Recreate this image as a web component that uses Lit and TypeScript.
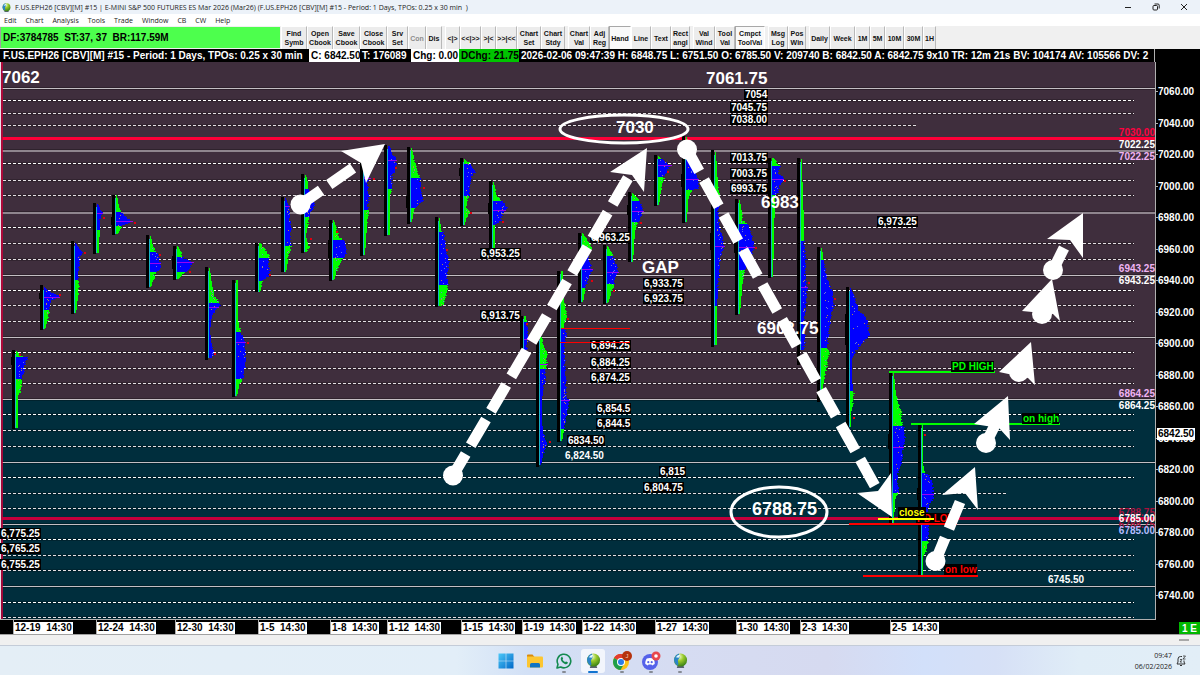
import { LitElement, html, svg, css } from "lit";
import { customElement } from "lit/decorators.js";
import { classMap } from "lit/directives/class-map.js";
import { styleMap } from "lit/directives/style-map.js";

type Pt = [number, number];

interface Profile {
  x: number;
  y: [number, number]; // extent of the black range bar
  va: [number, number]; // value area, drawn blue
  s: Pt[]; // silhouette as [y, width]
  poc?: number;
  dot?: Pt;
  ib?: [number, number]; // wider notch on the range bar
}

const PROFILES: Profile[] = [
  { x: 16, y: [350, 429], va: [357, 379], s: [[351, 1], [356, 6], [357, 12], [362, 9], [370, 8], [379, 6], [390, 5], [395, 2], [428, 2]], dot: [20, 354], ib: [357, 365] },
  { x: 44, y: [285, 330], va: [287, 310], s: [[287, 1], [291, 5], [295, 14], [297, 15], [300, 7], [310, 5], [320, 4], [325, 2], [329, 1]], poc: 297, dot: [60, 294], ib: [293, 299] },
  { x: 75, y: [241, 314], va: [243, 280], s: [[243, 1], [248, 4], [252, 8], [256, 4], [265, 4], [275, 3], [285, 4], [295, 3], [305, 2], [313, 1]], dot: [85, 252] },
  { x: 97, y: [203, 254], va: [204, 230], s: [[204, 1], [210, 4], [213, 5], [220, 3], [232, 3], [240, 2], [253, 2]], poc: 213, dot: [104, 217] },
  { x: 116, y: [195, 235], va: [212, 226], s: [[195, 1], [206, 3], [212, 5], [218, 11], [221, 16], [225, 6], [230, 4], [234, 1]], poc: 221, dot: [135, 222], ib: [217, 225] },
  { x: 150, y: [235, 288], va: [252, 272], s: [[236, 1], [246, 3], [252, 6], [253, 8], [258, 9], [265, 11], [270, 9], [272, 6], [280, 3], [287, 1]], poc: 263, dot: [160, 254] },
  { x: 177, y: [246, 280], va: [257, 272], s: [[246, 1], [254, 5], [258, 7], [260, 12], [262, 16], [268, 12], [272, 9], [274, 5], [279, 1]], poc: 262, dot: [190, 271], ib: [256, 269] },
  { x: 209, y: [267, 360], va: [303, 358], s: [[268, 1], [285, 3], [297, 6], [302, 10], [305, 11], [310, 7], [315, 3], [330, 1], [340, 2], [350, 4], [353, 5], [358, 2]], poc: 307, dot: [215, 353] },
  { x: 236, y: [280, 397], va: [332, 379], s: [[280, 2], [320, 2], [332, 5], [338, 8], [345, 9], [365, 9], [378, 7], [386, 3], [396, 1]], poc: 342, dot: [248, 342] },
  { x: 259, y: [243, 292], va: [258, 281], s: [[243, 2], [251, 7], [255, 10], [258, 11], [263, 9], [270, 11], [275, 10], [280, 4], [285, 3], [292, 1]], dot: [270, 274] },
  { x: 285, y: [197, 272], va: [198, 246], s: [[198, 1], [207, 4], [220, 5], [228, 6], [240, 5], [246, 6], [250, 5], [260, 3], [272, 1]], poc: 206 },
  { x: 305, y: [174, 253], va: [189, 217], s: [[175, 1], [182, 3], [188, 3], [200, 8], [205, 9], [212, 6], [218, 4], [225, 3], [235, 1], [248, 4], [252, 1]], dot: [311, 238] },
  { x: 333, y: [220, 281], va: [240, 258], s: [[220, 1], [236, 6], [240, 11], [250, 14], [255, 12], [260, 8], [270, 4], [280, 1]], dot: [337, 231], ib: [240, 258] },
  { x: 364, y: [150, 256], va: [160, 210], s: [[160, 1], [178, 6], [182, 3], [200, 5], [205, 3], [210, 5], [225, 3], [240, 2], [255, 1]], poc: 178, dot: [374, 178] },
  { x: 388, y: [145, 236], va: [146, 189], s: [[146, 2], [152, 4], [158, 8], [160, 8], [168, 8], [175, 4], [190, 4], [195, 2], [235, 2]], poc: 160, dot: [396, 167] },
  { x: 411, y: [147, 224], va: [178, 208], s: [[148, 1], [162, 4], [172, 7], [178, 9], [185, 9], [195, 11], [200, 12], [207, 5], [215, 2], [222, 1]], dot: [424, 187], ib: [196, 208] },
  { x: 439, y: [217, 307], va: [232, 285], s: [[218, 1], [230, 2], [233, 5], [250, 7], [262, 10], [275, 8], [285, 9], [295, 7], [303, 5], [306, 2]], dot: [447, 249] },
  { x: 464, y: [158, 226], va: [164, 196], s: [[159, 1], [163, 6], [168, 8], [171, 12], [175, 8], [185, 6], [195, 5], [207, 2], [212, 6], [218, 2], [225, 1]], dot: [471, 212], ib: [168, 176] },
  { x: 493, y: [181, 248], va: [201, 225], s: [[182, 1], [195, 4], [201, 9], [207, 14], [213, 9], [220, 8], [225, 2], [248, 2]], poc: 210, dot: [503, 221], ib: [203, 214] },
  { x: 524, y: [316, 349], va: [322, 350], s: [[316, 2], [324, 3], [335, 4], [350, 3]], poc: 339, dot: [527, 323] },
  { x: 540, y: [337, 467], va: [369, 465], s: [[337, 2], [345, 4], [352, 7], [365, 7], [370, 5], [380, 5], [390, 3], [400, 2], [420, 2], [432, 3], [440, 6], [445, 7], [450, 4], [465, 1]], poc: 364, dot: [550, 441] },
  { x: 561, y: [271, 442], va: [328, 429], s: [[271, 2], [295, 2], [308, 5], [318, 6], [325, 3], [335, 6], [345, 3], [370, 4], [385, 5], [395, 5], [400, 8], [410, 7], [418, 5], [430, 3], [441, 1]], poc: 400, dot: [568, 318] },
  { x: 582, y: [233, 303], va: [252, 288], s: [[233, 1], [240, 6], [248, 10], [255, 6], [262, 8], [270, 10], [277, 7], [285, 4], [302, 1]], poc: 269, dot: [592, 280] },
  { x: 607, y: [245, 304], va: [256, 284], s: [[246, 1], [255, 6], [265, 10], [272, 11], [280, 8], [285, 7], [292, 5], [303, 1]], poc: 272, dot: [614, 290] },
  { x: 632, y: [192, 262], va: [201, 222], s: [[193, 1], [200, 8], [210, 11], [218, 8], [222, 6], [230, 3], [262, 1]], poc: 211, dot: [641, 222], ib: [205, 215] },
  { x: 658, y: [155, 206], va: [159, 177], s: [[156, 1], [162, 8], [165, 13], [170, 9], [177, 6], [183, 5], [190, 3], [205, 1]], poc: 165, dot: [668, 171] },
  { x: 686, y: [136, 223], va: [155, 190], s: [[137, 1], [150, 3], [165, 7], [175, 11], [182, 13], [188, 12], [190, 6], [200, 2], [222, 1]], poc: 179, ib: [174, 187] },
  { x: 715, y: [150, 347], va: [200, 306], s: [[152, 1], [185, 3], [200, 5], [210, 3], [225, 4], [235, 7], [245, 9], [260, 5], [275, 4], [290, 3], [306, 2], [345, 2]], poc: 246, ib: [233, 250] },
  { x: 739, y: [199, 315], va: [224, 270], s: [[200, 1], [220, 4], [224, 9], [232, 12], [240, 14], [247, 15], [255, 12], [262, 9], [270, 6], [280, 4], [300, 2], [314, 1]], poc: 247, dot: [756, 247], ib: [240, 253] },
  { x: 772, y: [158, 278], va: [166, 195], s: [[158, 2], [166, 8], [172, 6], [178, 12], [185, 8], [192, 6], [195, 3], [240, 2], [277, 1]], poc: 179, dot: [785, 180] },
  { x: 801, y: [158, 365], va: [241, 352], s: [[159, 1], [205, 2], [215, 3], [240, 3], [260, 5], [270, 4], [290, 6], [300, 5], [320, 3], [335, 4], [350, 3]], poc: 287, dot: [809, 282] },
  { x: 821, y: [247, 402], va: [260, 348], s: [[248, 1], [262, 3], [275, 5], [295, 12], [305, 13], [315, 10], [330, 8], [348, 6], [352, 8], [365, 6], [380, 3], [395, 1]], dot: [835, 298] },
  { x: 850, y: [287, 427], va: [288, 391], s: [[288, 1], [298, 5], [310, 9], [317, 16], [325, 18], [334, 20], [340, 15], [350, 6], [358, 2], [380, 2], [388, 3], [392, 4], [405, 3], [412, 1], [427, 1]], dot: [854, 417], ib: [314, 345] },
  { x: 893, y: [372, 525], va: [426, 493], s: [[373, 1], [395, 3], [408, 7], [414, 9], [425, 9], [427, 11], [438, 12], [448, 10], [460, 9], [470, 6], [480, 4], [490, 6], [493, 5], [500, 2], [523, 1]], poc: 447, ib: [434, 449] },
  { x: 922, y: [423, 577], va: [473, 541], s: [[425, 1], [463, 1], [473, 3], [475, 7], [485, 11], [492, 11], [497, 12], [505, 7], [512, 5], [525, 7], [535, 6], [541, 6], [550, 4], [557, 1], [575, 1]], poc: 494, dot: [925, 434], ib: [488, 500] },
];

const SOLID: [number, boolean][] = [
  [88, false], [150, true], [212, true], [275, false], [337, false],
  [399, false], [462, false], [524, false], [586, false],
];

// dashed level: y and the x where it stops
const DASHED: Pt[] = [
  [100, 1134], [113, 1134], [125, 916], [163, 1134], [180, 1134], [195, 1134],
  [227, 916], [243, 1134], [259, 1134], [290, 1134], [305, 1134], [321, 1134],
  [352, 1134], [368, 1134], [383, 1134], [414, 1134], [430, 1134], [446, 1134],
  [477, 1134], [493, 1006], [508, 1134], [539, 1134], [555, 1134], [570, 1134],
  [602, 1134], [617, 1134],
];

interface Label { t: string; x: number; y: number; open?: boolean }
const LABELS: Label[] = [
  { t: "7054", x: 745, y: 98 }, { t: "7045.75", x: 731, y: 111 }, { t: "7038.00", x: 731, y: 123 },
  { t: "7013.75", x: 731, y: 161 }, { t: "7003.75", x: 731, y: 177 }, { t: "6993.75", x: 731, y: 192 },
  { t: "6,963.25", x: 591, y: 241 }, { t: "6,953.25", x: 481, y: 257 }, { t: "6,913.75", x: 481, y: 319 },
  { t: "6,973.25", x: 878, y: 225 }, { t: "6,933.75", x: 644, y: 287 }, { t: "6,923.75", x: 644, y: 302 },
  { t: "6,894.25", x: 591, y: 349 }, { t: "6,884.25", x: 591, y: 366 }, { t: "6,874.25", x: 591, y: 381 },
  { t: "6,854.5", x: 597, y: 412 }, { t: "6,844.5", x: 597, y: 427 }, { t: "6834.50", x: 568, y: 444 },
  { t: "6,824.50", x: 565, y: 459, open: true }, { t: "6,815", x: 660, y: 475 }, { t: "6,804.75", x: 644, y: 491 },
  { t: "6,775.25", x: 1, y: 537 }, { t: "6,765.25", x: 1, y: 552 }, { t: "6,755.25", x: 1, y: 568 },
  { t: "6745.50", x: 1048, y: 583, open: true },
];

const NOTES: { t: string; x: number; y: number; big?: boolean }[] = [
  { t: "7062", x: 2, y: 83 }, { t: "7061.75", x: 706, y: 84 }, { t: "7030", x: 616, y: 133 },
  { t: "GAP", x: 642, y: 273 }, { t: "6983", x: 761, y: 208 }, { t: "6903.75", x: 757, y: 334 },
  { t: "6788.75", x: 752, y: 515, big: true },
];

const EDGE: { t: string; y: number; c: string }[] = [
  { t: "7030.00", y: 136, c: "hot" }, { t: "7022.25", y: 148, c: "plain" }, { t: "7022.25", y: 160, c: "mauve" },
  { t: "6943.25", y: 272, c: "mauve" }, { t: "6943.25", y: 284, c: "plain" },
  { t: "6864.25", y: 397, c: "mauve" }, { t: "6864.25", y: 409, c: "plain" },
  { t: "6788.75", y: 516, c: "wine" }, { t: "6788.75", y: 528, c: "wine" },
  { t: "6785.00", y: 522, c: "plain" }, { t: "6785.00", y: 534, c: "sky" },
];

const ARROWS: { from: Pt; to: Pt; head: Pt[] }[] = [
  { from: [300.5, 204.5], to: [353, 168], head: [[385, 144], [341, 151], [361, 163], [366, 183]] },
  { from: [453, 475.5], to: [628, 178], head: [[647, 148], [610, 172], [632, 175], [644, 192]] },
  { from: [687, 149.5], to: [875, 486], head: [[892, 517], [857, 493], [878, 491], [891, 473]] },
  { from: [935.5, 561], to: [960, 502], head: [[975, 467], [942, 495], [965, 493], [978, 510]] },
  { from: [986, 443], to: [999, 417], head: [[1008, 396], [974, 424], [999, 428], [1010, 440]] },
  { from: [1019, 372], to: [1023, 362], head: [[1031, 342], [999, 372], [1028, 378], [1035, 385]] },
  { from: [1042, 314], to: [1046, 302], head: [[1052, 279], [1022, 311], [1053, 314], [1060, 321]] },
  { from: [1053, 270], to: [1064, 248], head: [[1083, 213], [1047, 239], [1070, 240], [1083, 258]] },
];

const SESSIONS: [number, string][] = [
  [13, "12-19\u00a0 14:30"], [96, "12-24\u00a0 14:30"], [175, "12-30\u00a0 14:30"], [258, "1-5\u00a0 14:30"],
  [330, "1-8\u00a0 14:30"], [387, "1-12\u00a0 14:30"], [461, "1-15\u00a0 14:30"], [522, "1-19\u00a0 14:30"],
  [582, "1-22\u00a0 14:30"], [655, "1-27\u00a0 14:30"], [736, "1-30\u00a0 14:30"], [800, "2-3\u00a0 14:30"],
  [890, "2-5\u00a0 14:30"],
];

/** Width of digits and punctuation in the bold 10px face. */
const inkWidth = (t: string) =>
  [...t].reduce((w, c) => w + (/[\d]/.test(c) ? 5.56 : /[-:]/.test(c) ? 3.33 : 2.78), 0);

const noise = (n: number) => {
  const v = Math.sin(n * 12.9898) * 43758.5453;
  return v - Math.floor(v);
};

@customElement("price-chart")
export class PriceChart extends LitElement {
  static styles = css`
    :host { display: block; background: #000; }
    .canvas { display: block; width: 100%; height: auto; font: bold 10px "Liberation Sans", Arial, sans-serif; }
    .plain { fill: #fff; }
    .dark { fill: #000; }
    .hot { fill: #ff0040; }
    .wine { fill: #a5123c; }
    .mauve { fill: #f0b4f4; }
    .sky { fill: #b4bcff; }
    .note { fill: #fff; font-size: 17px; }
    .note-big { font-size: 18px; }
    .edge { text-anchor: end; }
    .lime { fill: #00ff00; }
    .red { fill: #ff0000; }
    .yellow { fill: #ffff00; }
  `;

  private width(p: Profile, y: number) {
    const s = p.s;
    for (let i = 1; i < s.length; i++) {
      if (y <= s[i][0]) {
        const [y0, w0] = s[i - 1];
        const [y1, w1] = s[i];
        return w0 + ((w1 - w0) * (y - y0)) / (y1 - y0);
      }
    }
    return s[s.length - 1][1];
  }

  private profile(p: Profile) {
    let green = "";
    let blue = "";
    let ember = "";
    let ash = "";
    const top = p.s[0][0];
    const end = p.s[p.s.length - 1][0];
    for (let y = top; y < end; y++) {
      const base = this.width(p, y);
      const w = Math.max(1, Math.round(base + (base > 3 ? (noise(y + p.x) - 0.5) * 2 : 0)));
      const row = `M${p.x} ${y}h${w}v1h${-w}z`;
      if (y >= p.va[0] && y < p.va[1]) blue += row;
      else green += row;
      if (w > 4 && noise(y * 3 + p.x) > 0.7) {
        const dx = 2 + Math.floor(noise(y * 7 + p.x) * (w - 3));
        const speck = `M${p.x + dx} ${y}h1v1h-1z`;
        if (noise(y + 5) > 0.5) ember += speck;
        else ash += speck;
      }
    }
    return svg`
      <path d="M${p.x - 4} ${p.y[0]}h3V${p.y[1]}h-3z" fill="#000"></path>
      ${p.ib ? svg`<path d="M${p.x - 5} ${p.ib[0]}h2V${p.ib[1]}h-2z" fill="#000"></path>` : ""}
      <path d=${green} fill="#00ff00"></path>
      <path d=${blue} fill="#0000ff"></path>
      <path d="M${p.x - 1} ${top + 3}h1V${end}h-1z" fill="#19b4c8"></path>
      <path d=${ember} fill="#b08a50"></path>
      <path d=${ash} fill="#6c78d8"></path>
      ${p.poc ? svg`<path d="M${p.x} ${p.poc}h${Math.round(this.width(p, p.poc)) + 1}v1h${-Math.round(this.width(p, p.poc)) - 1}z" fill="#9a00f0"></path>` : ""}
      ${p.dot ? svg`<path d="M${p.dot[0] - 1} ${p.dot[1]}h2v2h-2z" fill="#e00010"></path>` : ""}`;
  }

  private tag(t: string, cls: string, x: number, y: number, w: number) {
    return svg`<rect x=${x - 1} y=${y - 9} width=${w} height="11" fill="#000"></rect>
      <text class=${cls} x=${x} y=${y}>${t}</text>`;
  }

  render() {
    const ticks = Array.from({ length: 17 }, (_, i) => ({ t: (7060 - 20 * i).toFixed(2), y: 91 + 31.5 * i }));
    return html`<svg class="canvas" viewBox="0 62 1200 573" role="img" aria-label="Market profile chart" shape-rendering="crispEdges">
      <rect x="0" y="62" width="1200" height="573" fill="#000"></rect>
      <rect x="0" y="62" width="1155" height="337" fill="#3f2e3d"></rect>
      <rect x="0" y="399" width="1155" height="220" fill="#002e3d"></rect>
      ${SOLID.map(([y, thick]) => svg`
        <rect x="2" y=${y - 1} width="1153" height="3" fill="#000" opacity="0.25"></rect>
        <rect x="2" y=${y} width="1153" height=${thick ? 2 : 1} fill=${thick ? "#8f858e" : "#c4bfc4"}></rect>`)}
      ${DASHED.map(([y, x2], i) => svg`
        <rect x="3" y=${y - 1} width=${x2 - 3} height="3" fill="#000" opacity="0.2"></rect>
        <line x1="3" x2=${x2} y1=${y + 0.5} y2=${y + 0.5} stroke=${i % 3 === 0 ? "#fff" : "#e4e0e4"} stroke-dasharray="3 2"></line>`)}
      <rect x="2" y="137" width="1153" height="3" fill="#ff0038"></rect>
      <rect x="2" y="517" width="1153" height="3" fill="#c4003c"></rect>
      <rect x="0" y="62" width="1" height="557" fill="#e8e0e6"></rect>
      <rect x="1" y="62" width="2" height="557" fill="#c8003a" opacity="0.8"></rect>
      <rect x="1155" y="62" width="1" height="558" fill="#b0b0b0"></rect>
      <rect x="0" y="619" width="1156" height="1" fill="#b0b0b0"></rect>

      ${PROFILES.map((p) => this.profile(p))}

      ${LABELS.map((l) => svg`
        ${l.open ? "" : svg`<rect x=${l.x - 1} y=${l.y - 9} width=${Math.round(inkWidth(l.t)) + 2} height="11" fill="#000"></rect>`}
        <text class="plain" x=${l.x} y=${l.y}>${l.t}</text>`)}
      <rect x="561" y="328" width="69" height="1" fill="#ff0000"></rect>
      <rect x="560" y="342" width="70" height="1" fill="#ff0000"></rect>
      ${NOTES.map((n) => svg`<text class=${n.big ? "note note-big" : "note"} x=${n.x} y=${n.y}>${n.t}</text>`)}

      <rect x="889" y="371" width="106" height="2" fill="#00ff00"></rect>
      ${this.tag("PD HIGH", "lime", 952, 370, 43)}
      <rect x="911" y="423" width="149" height="2" fill="#00ff00"></rect>
      ${this.tag("on high", "lime", 1023, 422, 37)}
      ${this.tag("PD LOW", "red", 917, 522, 40)}
      <rect x="849" y="523" width="108" height="2" fill="#ff0000"></rect>
      <rect x="878" y="518" width="56" height="2" fill="#ffff00"></rect>
      ${this.tag("close", "yellow", 899, 516, 28)}
      ${this.tag("on low", "red", 945, 573, 33)}
      <rect x="863" y="575" width="115" height="2" fill="#ff0000"></rect>

      <g shape-rendering="geometricPrecision" fill="#fff" stroke="#fff">
        <ellipse cx="624" cy="129" rx="64" ry="14" fill="none" stroke-width="3"></ellipse>
        <ellipse cx="779" cy="512" rx="48" ry="25" fill="none" stroke-width="3"></ellipse>
        ${ARROWS.map((a) => svg`
          <line x1=${a.from[0]} y1=${a.from[1]} x2=${a.to[0]} y2=${a.to[1]} stroke-width="11" stroke-dasharray="30 10" stroke-dashoffset="5"></line>
          <circle cx=${a.from[0]} cy=${a.from[1]} r="10" stroke="none"></circle>
          <polygon points=${a.head.map((h) => h.join(",")).join(" ")} stroke="none"></polygon>`)}
      </g>

      ${EDGE.map((e) => svg`<text class="edge ${e.c}" x="1155" y=${e.y}>${e.t}</text>`)}
      ${ticks.map((k) => svg`<rect x="1155" y=${Math.round(k.y)} width="3" height="1" fill="#b0b0b0"></rect>
        <text class="plain" x="1158" y=${Math.round(k.y) + 4}>${k.t}</text>`)}
      <rect x="1157" y="428" width="38" height="12" fill="#fff"></rect>
      <text class="dark" x="1158" y="437">6842.50</text>

      ${SESSIONS.map(([x, t]) => svg`
        <rect x=${x} y="620" width="1" height="14" fill="#b0b0b0"></rect>
        <rect x=${x + 1} y="622" width=${Math.round(inkWidth(t)) + 2} height="12" fill="#fff"></rect>
        <text class="dark" x=${x + 2} y="631">${t}</text>`)}
      <rect x="1179" y="622" width="21" height="12" fill="#00b800"></rect>
      <text class="plain" x="1182" y="632">1 E</text>
      <rect x="0" y="634" width="1200" height="1" fill="#a0a0a0"></rect>
    </svg>`;
  }
}

interface Tool { a: string; b?: string; w: number; on?: boolean; off?: boolean }
const TOOLS: Tool[][] = [
  [
    { a: "Find", b: "Symb", w: 26 }, { a: "Open", b: "Cbook", w: 26 }, { a: "Save", b: "Cbook", w: 27 },
    { a: "Close", b: "Cbook", w: 27 }, { a: "Srv", b: "Set", w: 21 }, { a: "Con", w: 18, off: true }, { a: "Dis", w: 16 },
  ],
  [{ a: "<|>", w: 15 }, { a: "<<|>>", w: 21 }, { a: ">|<", w: 15 }, { a: ">>|<<", w: 21 }, { a: "Chart", b: "Set", w: 24 }, { a: "Chart", b: "Stdy", w: 24 }],
  [
    { a: "Chart", b: "Val", w: 22 }, { a: "Adj", b: "Reg", w: 19 }, { a: "Hand", w: 22, on: true },
    { a: "Line", w: 20 }, { a: "Text", w: 20 }, { a: "Rect", b: "angl", w: 19 },
  ],
  [{ a: "Val", b: "Wind", w: 22 }, { a: "Tool", b: "Val", w: 20 }, { a: "Cmpct", b: "ToolVal", w: 30, on: true }],
  [{ a: "Msg", b: "Log", w: 20 }, { a: "Pos", b: "Win", w: 18 }],
  [
    { a: "Daily", w: 21 }, { a: "Week", w: 25 }, { a: "1M", w: 15 }, { a: "5M", w: 15 },
    { a: "10M", w: 19 }, { a: "30M", w: 19 }, { a: "1H", w: 13 },
  ],
];

const globe = (id: string, size: number) => svg`<svg viewBox="0 0 16 16" width=${size} height=${size} aria-hidden="true">
  <defs><radialGradient id=${id} cx="0.4" cy="0.25" r="0.8">
    <stop offset="0" stop-color="#f2fbd0"></stop><stop offset="0.4" stop-color="#9acb2c"></stop><stop offset="1" stop-color="#2f7a14"></stop>
  </radialGradient></defs>
  <path d="M5 13h6l1 3H4z" fill="#59656f"></path>
  <circle cx="8" cy="7.500" r="7" fill=${`url(#${id})`}></circle>
  <path d="M1.500 5a7 7 0 0 1 5-4.400C6 3 8 4 6 6.500S7 11 5 13.500A7 7 0 0 1 1.500 5z" fill="#2a84c8"></path>
  <path d="M3 4.500a6 6 0 0 1 5-3L6 5z" fill="#e4f8ff"></path>
</svg>`;

@customElement("app-root")
export class AppRoot extends LitElement {
  static styles = css`
    :host { display: flex; flex-direction: column; min-height: 100vh; background: #f0f0f0; color: #000; font-family: "Liberation Sans", Arial, sans-serif; overflow: hidden; }
    button { margin: 0; padding: 0; border: 0; background: none; color: inherit; font: inherit; }
    svg { display: block; }
    .titlebar { display: flex; align-items: center; height: 14px; padding: 0 12px 0 2px; gap: 4px; background: #ecf2f9; color: #222; }
    .title { flex: 1; font: 400 7px "Open Sans", sans-serif; margin: 0; white-space: pre; }
    .window-buttons { display: flex; gap: 20px; }
    .menu { display: flex; align-items: center; height: 12px; padding: 0 4px; gap: 9px; background: #fff; font: 7px "Open Sans", sans-serif; color: #222; }
    .toolbar { display: flex; height: 23px; background: #f0f0f0; overflow: hidden; }
    .status { width: 280px; flex: none; margin: 1px 0; padding-left: 2px; box-sizing: border-box; display: flex; align-items: center; background: #4dff4d; border-left: 1px solid #a0a0a0; font: bold 10px "Liberation Sans", Arial, sans-serif; white-space: pre; }
    .group { display: flex; flex: none; margin-left: 3px; }
    .group:first-of-type { margin-left: 0; }
    .status + .group { margin-left: 1px; }
    .tool { flex: none; box-sizing: border-box; border-right: 1px solid #b8b8b8; border-left: 1px solid #fff; border-top: 1px solid #fff; background: #ececec; font: bold 7px/9px "Liberation Sans", Arial, sans-serif; text-align: center; white-space: nowrap; color: #111; }
    .line { display: block; margin: 0 -4px; }
    .on { background: #f9f9f9; border-color: #a8a8a8 #fff #fff #a8a8a8; }
    .off { color: #8c8c8c; }
    .quotes { display: flex; height: 13px; background: #000; color: #fff; font: bold 10px/13px "Liberation Sans", Arial, sans-serif; white-space: pre; overflow: hidden; }
    .cell { flex: none; box-sizing: border-box; padding-left: 2px; }
    .head { width: 309px; padding-left: 3px; }
    .narrow { width: 48px; }
    .wide { width: 51px; }
    .light { background: #fff; color: #000; }
    .gain { background: #00c400; color: #000; width: 60px; }
    .feed { flex: 1; margin-right: 45px; border-right: 1px solid #b0b0b0; overflow: hidden; }
    .strip { display: flex; justify-content: flex-end; align-items: center; height: 10px; padding-right: 11px; }
    .grip { width: 10px; height: 2px; background: #a8a8a8; }
    .taskbar { flex: 1; min-height: 30px; box-sizing: border-box; display: grid; grid-template-columns: 1fr auto 1fr; align-items: center; padding-right: 14px; border-top: 1px solid #c4ccd8; background: linear-gradient(90deg, #e4eef6 0%, #e2eef8 38%, #d2e0f6 44%, #d6dcf2 56%, #d6daf0 69%, #d2e0fa 77%, #d6e0f6 83%, #e0edf7 90%, #e2eef7 100%); }
    .apps { grid-column: 2; display: flex; gap: 5px; }
    .app { position: relative; width: 24px; height: 24px; border-radius: 3px; display: flex; align-items: center; justify-content: center; }
    .current { background: rgba(255, 255, 255, 0.7); }
    .dot { position: absolute; bottom: 0; left: 10px; width: 4px; height: 2px; border-radius: 1px; background: #868b94; }
    .current .dot { left: 7px; width: 10px; background: #1173d0; }
    .tray { display: flex; justify-content: flex-end; align-items: center; gap: 4px; }
    .clock { font: 7px/11px "Open Sans", sans-serif; text-align: right; color: #222; }
    .clock-line { display: block; }
  `;

  private tool(t: Tool) {
    return html`<button class=${classMap({ tool: true, on: !!t.on, off: !!t.off })} style=${styleMap({ width: `${t.w}px` })}>
      <span class="line">${t.a}</span>${t.b ? html`<span class="line">${t.b}</span>` : ""}
    </button>`;
  }

  private app(name: string, icon: unknown, running = true, current = false) {
    return html`<button class=${classMap({ app: true, current })} aria-label=${name}>${icon}${running ? html`<span class="dot"></span>` : ""}</button>`;
  }

  render() {
    return html`
      <header class="titlebar">
        ${globe("g-title", 9)}
        <h1 class="title">F.US.EPH26 [CBV][M] #15 | E-MINI S&amp;P 500 FUTURES ES Mar 2026 (Mar26) (F.US.EPH26 [CBV][M] #15 - Period: 1 Days, TPOs: 0.25 x 30 min  )</h1>
        <div class="window-buttons">
          <button aria-label="Minimise"><svg width="8" height="8" viewBox="0 0 8 8"><path d="M1 4.500h6" stroke="#222"></path></svg></button>
          <button aria-label="Restore"><svg width="8" height="8" viewBox="0 0 8 8" fill="none" stroke="#222"><rect x="1" y="2.500" width="4.500" height="4.500" rx="1"></rect><path d="M2.500 1h3.500a1.200 1.200 0 0 1 1.200 1.200V5.500"></path></svg></button>
          <button aria-label="Close"><svg width="8" height="8" viewBox="0 0 8 8"><path d="M1 1l6 6M7 1l-6 6" stroke="#222"></path></svg></button>
        </div>
      </header>
      <nav class="menu">
        ${["Edit", "Chart", "Analysis", "Tools", "Trade", "Window", "CB", "CW", "Help"].map((m) => html`<button>${m}</button>`)}
      </nav>
      <div class="toolbar">
        <div class="status">DF:3784785  ST:37, 37  BR:117.59M</div>
        ${TOOLS.map((g) => html`<div class="group">${g.map((t) => this.tool(t))}</div>`)}
      </div>
      <div class="quotes">
        <div class="cell head">F.US.EPH26 [CBV][M] #15 - Period: 1 Days, TPOs: 0.25 x 30 min</div>
        <div class="cell wide light">C: 6842.50</div>
        <div class="cell wide">T: 176089</div>
        <div class="cell narrow light">Chg: 0.00</div>
        <div class="cell gain">DChg: 21.75</div>
        <div class="cell feed">2026-02-06 09:47:39 H: 6848.75 L: 6751.50 O: 6785.50 V: 209740 B: 6842.50 A: 6842.75 9x10 TR: 12m 21s BV: 104174 AV: 105566 DV: 2</div>
      </div>
      <price-chart></price-chart>
      <div class="strip"><div class="grip"></div></div>
      <footer class="taskbar">
        <div class="apps">
          ${this.app("Start", svg`<svg width="16" height="16" viewBox="0 0 16 16"><defs><linearGradient id="win" x1="0" y1="0" x2="1" y2="1"><stop offset="0" stop-color="#4cc8f8"></stop><stop offset="1" stop-color="#0068c8"></stop></linearGradient></defs><path d="M.5.5h7.200v7.200H.5zM8.300.5h7.200v7.200H8.300zM.5 8.300h7.200v7.200H.5zM8.300 8.300h7.200v7.200H8.300z" fill="url(#win)"></path></svg>`, false)}
          ${this.app("File Explorer", svg`<svg width="16" height="16" viewBox="0 0 16 16"><path d="M0 2.500a1 1 0 0 1 1-1h4.500L7.500 4H0z" fill="#d98b0c"></path><path d="M0 3.500h15a1 1 0 0 1 1 1v9a1 1 0 0 1-1 1H1a1 1 0 0 1-1-1z" fill="#fcc631"></path><path d="M3 14.500v-3a1.500 1.500 0 0 1 1.500-1.500h7a1.500 1.500 0 0 1 1.500 1.500v3z" fill="#0f74c4"></path></svg>`, false)}
          ${this.app("WhatsApp", svg`<svg width="16" height="16" viewBox="0 0 16 16"><path d="M1 15l1-3.700A6.800 6.800 0 1 1 4.700 14z" fill="none" stroke="#148a50" stroke-width="1.600" stroke-linejoin="round"></path><path d="M5.300 4.200c.5-.5 1-.4 1.200 0l.6 1.400c.1.400-.6.900-.5 1.200.5 1 1.400 1.800 2.400 2.300.4.100.8-.8 1.200-.7l1.500.8c.4.200.2 1-.2 1.400-1.200 1.200-3 .5-4.600-.9C5.100 8.100 4 5.800 5.300 4.200z" fill="#148a50"></path></svg>`)}
          ${this.app("Charting", globe("g-active", 15), true, true)}
          ${this.app("Chrome", svg`<svg width="20" height="20" viewBox="0 0 20 20"><circle cx="9" cy="11" r="8" fill="#fbc116"></circle><path d="M9 11L2.100 7A8 8 0 0 1 16 7H9z" fill="#e33b2e"></path><path d="M2.100 7A8 8 0 0 0 8.500 19l3.700-6.300L9 11z" fill="#1e9e4a"></path><path d="M2.100 7A8 8 0 0 1 9 3v4z" fill="#e33b2e"></path><circle cx="9" cy="11" r="4" fill="#fff"></circle><circle cx="9" cy="11" r="3" fill="#2a7de8"></circle><circle cx="15" cy="5" r="5" fill="#b5330e"></circle><text x="13.500" y="7" font-size="6" fill="#f8c8b0" font-family="Liberation Sans">J</text></svg>`)}
          ${this.app("Discord", svg`<svg width="20" height="20" viewBox="0 0 20 20"><circle cx="9" cy="11" r="8" fill="#5562ea"></circle><path d="M5.800 7.600C7.500 6.800 10.500 6.800 12.200 7.600c1.200 1.600 1.700 3.600 1.500 5.500-.8.700-1.700 1.100-2.600 1.300l-.6-1H7.500l-.6 1c-.9-.2-1.800-.6-2.600-1.300-.2-1.900.3-3.900 1.500-5.500z" fill="#fff"></path><circle cx="7.300" cy="11.200" r="1.100" fill="#5562ea"></circle><circle cx="10.700" cy="11.200" r="1.100" fill="#5562ea"></circle><circle cx="15" cy="5" r="4.500" fill="#e8484c"></circle><circle cx="15" cy="5" r="1.800" fill="#fff"></circle></svg>`)}
          ${this.app("Charting feed", globe("g-feed", 15))}
        </div>
        <div class="tray">
          <time class="clock"><span class="clock-line">09:47</span><span class="clock-line">06/02/2026</span></time>
          <svg width="10" height="12" viewBox="0 0 10 12" fill="none" stroke="#333"><path d="M6 1.500H4.500A2.500 2.500 0 0 0 2 4v3L1 9h8L8 7V5.500M4 10.500h2"></path><path d="M7 1h2.500L7 4h2.500M4 4.500h2L4 7h2" stroke-width="0.800"></path></svg>
        </div>
      </footer>`;
  }
}
